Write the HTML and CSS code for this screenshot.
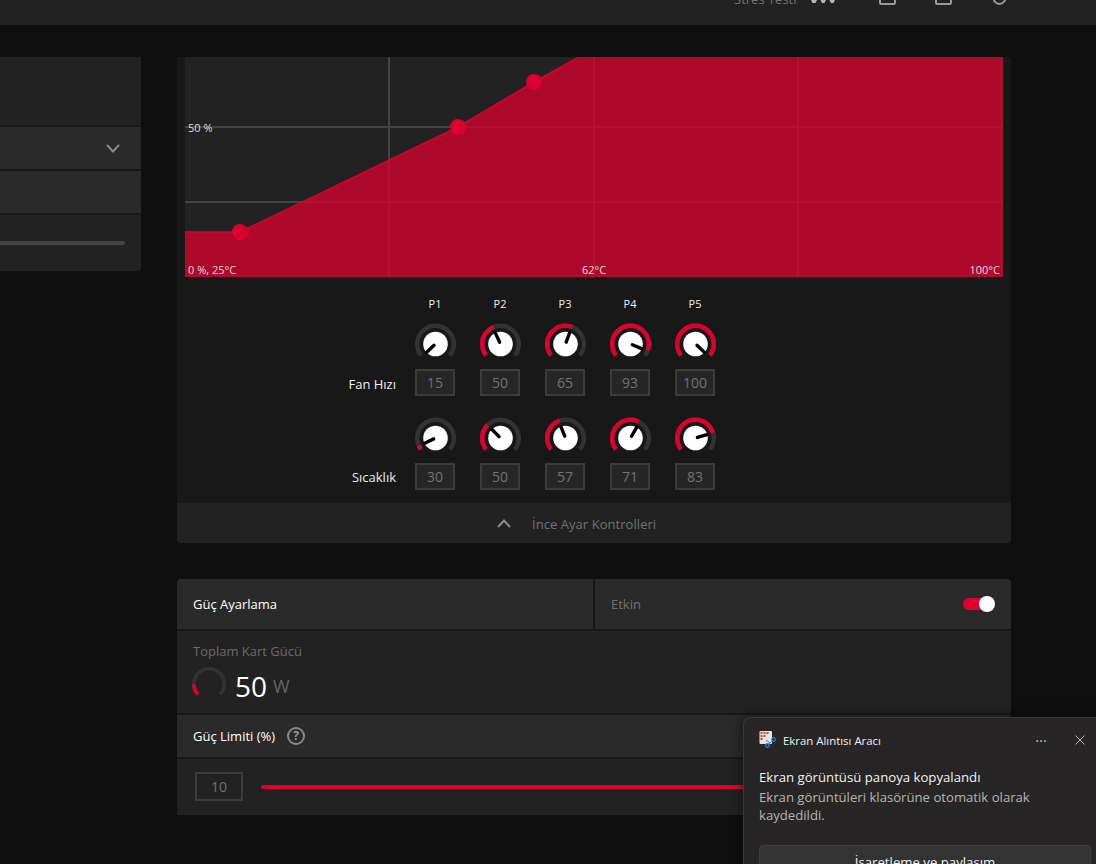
FILE: index.html
```html
<!DOCTYPE html>
<html lang="en">
<head>
    <meta charset="UTF-8">
    <meta name="viewport" content="width=device-width, initial-scale=1.0">
    <title>Ayarlama</title>
    <link rel="stylesheet" href="styles.css">
</head>
<body>

    <svg class="defs" width="0" height="0">
        <defs>
            <g id="knob-base">
                <path class="knob-track" d="M-14.42 11.27A18.3 18.3 0 1 1 14.42 11.27"/>
            </g>
        </defs>
    </svg>

    <div class="topbar">
        <div class="tools">
            <span class="tools-label">Stres Testi</span>
            <svg class="tool-chart" width="25" height="3" viewBox="0 0 25 3"><path d="M1 0H7L5.5 3H2.5ZM10.5 0H16L14.5 3H12ZM19.5 0H25L23.5 3H21Z"/></svg>
            <span class="tool-box"></span>
            <span class="tool-box"></span>
            <span class="tool-round"></span>
        </div>
    </div>

    <div class="content">
        <div class="side-panel">
            <div class="side-row side-row-tall"></div>
            <div class="side-row side-row-light">
                <svg class="chevron" width="14" height="9" viewBox="0 0 14 9"><path d="M1 1 7 7.5 13 1"/></svg>
            </div>
            <div class="side-row side-row-light"></div>
            <div class="side-row side-row-slider"><div class="side-slider"></div></div>
        </div>

        <div class="main-col">
            <div class="card">
                <svg class="chart" width="818" height="220" viewBox="0 0 818 220">
                    <g class="chart-grid">
                        <path d="M0 70H818M0 145H818M204 0V220M409 0V220M613 0V220"/>
                    </g>
                    <path class="chart-fill" d="M-5 175H55L273 70 349 25 394 0 394 -5H817V219H-5Z"/>
                    <circle class="chart-point" cx="55" cy="175" r="8"/>
                    <circle class="chart-point" cx="273" cy="70" r="8"/>
                    <circle class="chart-point" cx="349" cy="25" r="8"/>
                    <text x="3" y="75">50 %</text>
                    <text x="3" y="217">0 %, 25°C</text>
                    <text x="409" y="217" text-anchor="middle">62°C</text>
                    <text x="815" y="217" text-anchor="end">100°C</text>
                </svg>

                <div class="tune">
                    <div></div>
                    <div class="point-name">P1</div>
                    <div class="point-name">P2</div>
                    <div class="point-name">P3</div>
                    <div class="point-name">P4</div>
                    <div class="point-name">P5</div>

                    <div class="tune-label">Fan Hızı</div>
                    <div class="tune-cell">
                        <svg class="knob" viewBox="-21.5 -21 42 42"><use href="#knob-base"/><circle class="knob-cap" r="12.3"/><line class="knob-needle" y1="-2" y2="-12" transform="rotate(-133)"/></svg>
                        <div class="num-box">15</div>
                    </div>
                    <div class="tune-cell">
                        <svg class="knob" viewBox="-21.5 -21 42 42"><use href="#knob-base"/><path class="knob-value" pathLength="256" stroke-dasharray="106 999" d="M-14.42 11.27A18.3 18.3 0 1 1 14.42 11.27"/><circle class="knob-cap" r="12.3"/><line class="knob-needle" y1="-2" y2="-12" transform="rotate(-25)"/></svg>
                        <div class="num-box">50</div>
                    </div>
                    <div class="tune-cell">
                        <svg class="knob" viewBox="-21.5 -21 42 42"><use href="#knob-base"/><path class="knob-value" pathLength="256" stroke-dasharray="150 999" d="M-14.42 11.27A18.3 18.3 0 1 1 14.42 11.27"/><circle class="knob-cap" r="12.3"/><line class="knob-needle" y1="-2" y2="-12" transform="rotate(20)"/></svg>
                        <div class="num-box">65</div>
                    </div>
                    <div class="tune-cell">
                        <svg class="knob" viewBox="-21.5 -21 42 42"><use href="#knob-base"/><path class="knob-value" pathLength="256" stroke-dasharray="238 999" d="M-14.42 11.27A18.3 18.3 0 1 1 14.42 11.27"/><circle class="knob-cap" r="12.3"/><line class="knob-needle" y1="-2" y2="-12" transform="rotate(113)"/></svg>
                        <div class="num-box">93</div>
                    </div>
                    <div class="tune-cell">
                        <svg class="knob" viewBox="-21.5 -21 42 42"><use href="#knob-base"/><path class="knob-value" pathLength="256" stroke-dasharray="256 999" d="M-14.42 11.27A18.3 18.3 0 1 1 14.42 11.27"/><circle class="knob-cap" r="12.3"/><line class="knob-needle" y1="-2" y2="-12" transform="rotate(133)"/></svg>
                        <div class="num-box">100</div>
                    </div>

                    <div class="tune-label tune-label-low">Sıcaklık</div>
                    <div class="tune-cell">
                        <svg class="knob" viewBox="-21.5 -21 42 42"><use href="#knob-base"/><path class="knob-value" pathLength="256" stroke-dasharray="13 999" d="M-14.42 11.27A18.3 18.3 0 1 1 14.42 11.27"/><circle class="knob-cap" r="12.3"/><line class="knob-needle" y1="-2" y2="-12" transform="rotate(-116)"/></svg>
                        <div class="num-box">30</div>
                    </div>
                    <div class="tune-cell">
                        <svg class="knob" viewBox="-21.5 -21 42 42"><use href="#knob-base"/><path class="knob-value" pathLength="256" stroke-dasharray="83 999" d="M-14.42 11.27A18.3 18.3 0 1 1 14.42 11.27"/><circle class="knob-cap" r="12.3"/><line class="knob-needle" y1="-2" y2="-12" transform="rotate(-45)"/></svg>
                        <div class="num-box">50</div>
                    </div>
                    <div class="tune-cell">
                        <svg class="knob" viewBox="-21.5 -21 42 42"><use href="#knob-base"/><path class="knob-value" pathLength="256" stroke-dasharray="110 999" d="M-14.42 11.27A18.3 18.3 0 1 1 14.42 11.27"/><circle class="knob-cap" r="12.3"/><line class="knob-needle" y1="-2" y2="-12" transform="rotate(-22)"/></svg>
                        <div class="num-box">57</div>
                    </div>
                    <div class="tune-cell">
                        <svg class="knob" viewBox="-21.5 -21 42 42"><use href="#knob-base"/><path class="knob-value" pathLength="256" stroke-dasharray="155 999" d="M-14.42 11.27A18.3 18.3 0 1 1 14.42 11.27"/><circle class="knob-cap" r="12.3"/><line class="knob-needle" y1="-2" y2="-12" transform="rotate(30)"/></svg>
                        <div class="num-box">71</div>
                    </div>
                    <div class="tune-cell">
                        <svg class="knob" viewBox="-21.5 -21 42 42"><use href="#knob-base"/><path class="knob-value" pathLength="256" stroke-dasharray="202 999" d="M-14.42 11.27A18.3 18.3 0 1 1 14.42 11.27"/><circle class="knob-cap" r="12.3"/><line class="knob-needle" y1="-2" y2="-12" transform="rotate(74)"/></svg>
                        <div class="num-box">83</div>
                    </div>
                </div>

                <div class="card-footer">
                    <svg class="chevron" width="14" height="9" viewBox="0 0 14 9"><path d="M1 8 7 1.5 13 8"/></svg>
                    <span class="footer-text">İnce Ayar Kontrolleri</span>
                </div>
            </div>

            <div class="card power">
                <div class="power-head">
                    <div class="power-title">Güç Ayarlama</div>
                    <div class="power-state">
                        <span>Etkin</span>
                        <div class="toggle"><div class="toggle-thumb"></div></div>
                    </div>
                </div>
                <div class="power-total">
                    <div class="total-label">Toplam Kart Gücü</div>
                    <div class="total-value">
                        <svg class="gauge" width="36" height="36" viewBox="-18 -18 36 36">
                            <path class="gauge-track" d="M-10.9 10.6A15.2 15.2 0 1 1 10.9 10.6"/>
                            <path class="gauge-fill" d="M-10.9 10.6A15.2 15.2 0 0 1 -15.2 0.5"/>
                        </svg>
                        <span class="total-num">50</span>
                        <span class="total-unit">W</span>
                    </div>
                </div>
                <div class="limit-head">
                    <span>Güç Limiti (%)</span>
                    <span class="help">?</span>
                </div>
                <div class="limit-body">
                    <div class="limit-box">10</div>
                    <div class="limit-slider"></div>
                </div>
            </div>
        </div>
    </div>

    <div class="toast">
        <div class="toast-head">
            <svg class="toast-icon" width="18" height="18" viewBox="0 0 18 18">
                <rect x="0.5" y="0" width="12.5" height="13" rx="1" fill="#e6e6e6"/>
                <g fill="#e2471c">
                    <rect x="1.5" y="1" width="2" height="2"/><rect x="4.5" y="1" width="2" height="2"/><rect x="7.5" y="1" width="2" height="2"/>
                    <rect x="1.5" y="4" width="2" height="2"/><rect x="4.5" y="4" width="2" height="2"/>
                    <rect x="1.5" y="7" width="2" height="2"/>
                </g>
                <path d="M9 14 14 9M7 9 11 12" stroke="#1f8ad6" stroke-width="1" fill="none"/>
                <circle cx="8.5" cy="14.5" r="1.8" fill="none" stroke="#1f8ad6" stroke-width="1.2"/>
                <circle cx="14.5" cy="8.5" r="1.8" fill="none" stroke="#1f8ad6" stroke-width="1.2"/>
            </svg>
            <span class="toast-app">Ekran Alıntısı Aracı</span>
            <span class="toast-more">···</span>
            <svg class="toast-close" width="10" height="10" viewBox="0 0 10 10"><path d="M.5.5 9.5 9.5M9.5.5.5 9.5"/></svg>
        </div>
        <div class="toast-title">Ekran görüntüsü panoya kopyalandı</div>
        <div class="toast-text">Ekran görüntüleri klasörüne otomatik olarak kaydedildi.</div>
        <button class="toast-btn">İşaretleme ve paylaşım</button>
    </div>

</body>
</html>
```

FILE: styles.css
```css
body {
    margin: 0;
    height: 864px;
    overflow: hidden;
    background-color: #0f0f0f;
    font-family: "Open Sans", "Noto Sans", sans-serif;
    font-size: 13px;
    color: #fff;
}

.defs {
    display: block;
    height: 0;
}

/* Top bar, scrolled almost out of view */
.topbar {
    height: 25px;
    background-color: #222;
    overflow: hidden;
}

.tools {
    height: 5px;
    display: flex;
    align-items: flex-end;
    padding-left: 734px;
}

.tools-label {
    width: 76px;
    flex: none;
    color: #6f7276;
    font-size: 13px;
    line-height: 18px;
    margin-bottom: -3px;
}

.tool-chart {
    flex: none;
    margin-bottom: 2px;
    margin-right: 44px;
}

.tool-chart path {
    fill: #b5b5b5;
}

.tool-box {
    flex: none;
    width: 13px;
    height: 14px;
    border: 2px solid #999;
    border-radius: 2px;
    margin-right: 39px;
}

.tool-round {
    flex: none;
    width: 11px;
    height: 14px;
    border: 2px solid #999;
    border-radius: 50%;
    margin-left: 1px;
}

/* Main area */
.content {
    margin-top: 32px;
    height: 807px;
    overflow: hidden;
    display: flex;
    align-items: flex-start;
    gap: 36px;
}

.side-panel {
    width: 141px;
    flex: none;
    display: flex;
    flex-direction: column;
    gap: 2px;
    background-color: #191919;
    border-bottom-right-radius: 4px;
    overflow: hidden;
}

.side-row {
    height: 42px;
    background-color: #222;
}

.side-row-tall {
    height: 68px;
}

.side-row-light {
    background-color: #2a2a2a;
    display: flex;
    align-items: center;
    justify-content: flex-end;
    padding-right: 21px;
}

.side-row-slider {
    height: 56px;
    padding-top: 26px;
    box-sizing: border-box;
}

.side-slider {
    width: 125px;
    height: 4px;
    border-radius: 0 2px 2px 0;
    background-color: #444;
}

.chevron path {
    fill: none;
    stroke: #8a8a8a;
    stroke-width: 2;
}

.main-col {
    width: 834px;
    flex: none;
    display: flex;
    flex-direction: column;
    gap: 36px;
}

.card {
    background-color: #181818;
    border-radius: 0 0 4px 4px;
    overflow: hidden;
}

/* Fan curve */
.chart {
    display: block;
    margin: 0 8px;
    background-color: #222;
}

.chart-grid path {
    fill: none;
    stroke: #444;
    stroke-width: 2;
}

.chart-fill {
    fill: rgba(212, 3, 46, 0.78);
    stroke: #d9002f;
    stroke-width: 1.5;
}

.chart-point {
    fill: #dc0030;
}

.chart text {
    font-size: 11px;
    fill: #ddd;
}

/* Fine tune grid */
.tune {
    height: 226px;
    display: grid;
    grid-template-columns: 225.5px repeat(5, 65px);
    grid-template-rows: 46px 93.5px 86.5px;
    justify-items: center;
}

.point-name {
    align-self: start;
    margin-top: 19px;
    font-size: 11px;
    line-height: 15px;
    color: #eee;
}

.tune-label {
    justify-self: end;
    align-self: start;
    padding-right: 6.5px;
    font-size: 13px;
    line-height: 18px;
    margin-top: 52px;
    color: #eee;
}

.tune-label-low {
    margin-top: 51px;
}

.tune-cell {
    display: flex;
    flex-direction: column;
    align-items: center;
    width: 40px;
}

.knob {
    display: block;
    width: 42px;
    height: 42px;
    flex: none;
}

.knob-track {
    fill: none;
    stroke: #333;
    stroke-width: 4.5;
}

.knob-value {
    fill: none;
    stroke: #dc0030;
    stroke-width: 4.5;
}

.knob-cap {
    fill: #fff;
}

.knob-needle {
    stroke: #000;
    stroke-width: 3.4;
    stroke-linecap: round;
}

.num-box {
    box-sizing: border-box;
    width: 40px;
    height: 27px;
    margin-top: 4px;
    border: 2px solid #3c3c3c;
    background-color: #262626;
    color: #737373;
    font-size: 14px;
    line-height: 23px;
    text-align: center;
}

.card-footer {
    height: 40px;
    background-color: #222;
    display: flex;
    align-items: center;
    padding-left: 320px;
    gap: 21px;
    color: #6f7276;
    font-size: 13px;
}

.footer-text {
    padding-top: 1px;
    letter-spacing: 0.05px;
}

/* Power tuning */
.power {
    border-radius: 4px 4px 0 0;
    display: flex;
    flex-direction: column;
    gap: 2px;
}

.power-head {
    height: 50px;
    display: flex;
    gap: 2px;
}

.power-title {
    width: 416px;
    flex: none;
    padding-left: 16px;
    background-color: #2a2a2a;
    box-sizing: border-box;
    line-height: 50px;
}

.power-state {
    flex: 1;
    background-color: #2a2a2a;
    display: flex;
    align-items: center;
    justify-content: space-between;
    padding: 0 16px;
    color: #737373;
}

.toggle {
    width: 27px;
    height: 12px;
    border-radius: 6px;
    background-color: #e0002f;
    display: flex;
    align-items: center;
    margin-right: 5px;
}

.toggle-thumb {
    width: 16px;
    height: 16px;
    flex: none;
    border-radius: 50%;
    background-color: #fff;
    margin-left: 16px;
}

.power-total {
    height: 82px;
    box-sizing: border-box;
    padding: 11px 16px 0;
    background-color: #222;
}

.total-label {
    color: #6b6b6b;
    line-height: 18px;
}

.total-value {
    display: flex;
    align-items: center;
    height: 36px;
    margin-top: 6px;
    margin-left: -2px;
}

.gauge {
    flex: none;
    margin-right: 8px;
}

.gauge-track {
    fill: none;
    stroke: #333;
    stroke-width: 3.6;
}

.gauge-fill {
    fill: none;
    stroke: #dc0030;
    stroke-width: 3.6;
}

.total-num {
    font-size: 28px;
    line-height: 36px;
    margin-top: 4px;
}

.total-unit {
    font-size: 18px;
    color: #666;
    margin-left: 6px;
    margin-top: 4px;
}

.limit-head {
    height: 42px;
    background-color: #2a2a2a;
    display: flex;
    align-items: center;
    padding-left: 16px;
    gap: 12px;
}

.help {
    box-sizing: border-box;
    width: 18px;
    height: 18px;
    border: 2px solid #888;
    border-radius: 50%;
    color: #999;
    font-size: 12px;
    font-weight: 700;
    line-height: 14px;
    text-align: center;
}

.limit-body {
    height: 56px;
    box-sizing: border-box;
    padding: 13px 16px 0 18px;
    background-color: #222;
    display: flex;
    align-items: flex-start;
    gap: 18px;
}

.limit-box {
    box-sizing: border-box;
    width: 48px;
    height: 29px;
    flex: none;
    border: 2px solid #3c3c3c;
    color: #737373;
    font-size: 14px;
    line-height: 26px;
    text-align: center;
}

.limit-slider {
    flex: 1;
    height: 4px;
    margin-top: 13px;
    border-radius: 2px;
    background-color: #e0002f;
}

/* Windows notification, on top of everything */
.toast {
    position: absolute;
    left: 743px;
    top: 717px;
    width: 353px;
    height: 147px;
    box-sizing: border-box;
    padding: 13px 5px 0 15px;
    background-color: #272525;
    border: 1px solid #3a3a3a;
    border-right: none;
    border-bottom: none;
    border-radius: 8px 0 0 0;
    box-shadow: 0 0 14px rgba(0, 0, 0, 0.5);
    overflow: hidden;
}

.toast-head {
    display: flex;
    align-items: center;
    height: 18px;
}

.toast-icon {
    flex: none;
    margin-right: 6px;
}

.toast-app {
    flex: 1;
    font-size: 11.4px;
    color: #f0f0f0;
}

.toast-more {
    color: #bbb;
    font-size: 15px;
    line-height: 18px;
    margin-right: 28px;
}

.toast-close {
    margin-right: 6px;
}

.toast-close path {
    fill: none;
    stroke: #bbb;
    stroke-width: 1;
}

.toast-title {
    margin-top: 19px;
    font-size: 13.2px;
    line-height: 18px;
    color: #f2f2f2;
}

.toast-text {
    width: 300px;
    margin-top: 2px;
    font-size: 13.15px;
    line-height: 18px;
    color: #b5b5b5;
}

.toast-btn {
    display: block;
    width: 332px;
    height: 34px;
    margin-top: 21px;
    padding: 0;
    background-color: #333;
    border: 1px solid #3d3d3d;
    border-radius: 4px;
    color: #f2f2f2;
    font-family: inherit;
    font-size: 13.2px;
    line-height: 18px;
}
```
